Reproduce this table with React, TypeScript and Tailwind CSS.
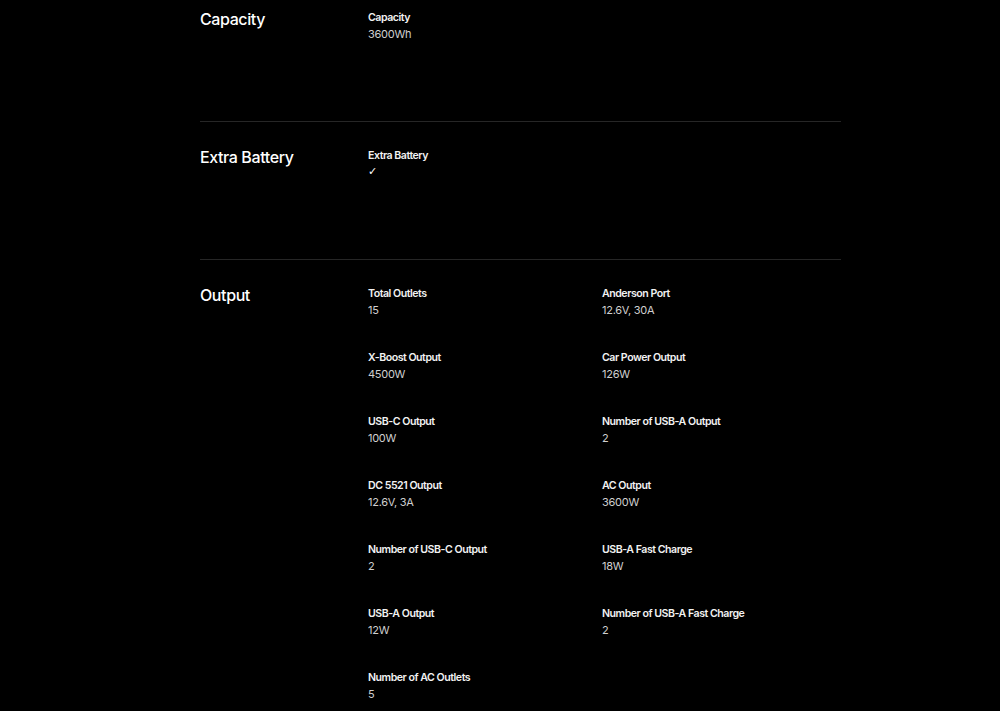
import * as React from "react";

type Spec = { label: string; value: string };

const sections: { title: string; specs: Spec[] }[] = [
  { title: "Capacity", specs: [{ label: "Capacity", value: "3600Wh" }] },
  { title: "Extra Battery", specs: [{ label: "Extra Battery", value: "✓" }] },
  {
    title: "Output",
    specs: [
      { label: "Total Outlets", value: "15" },
      { label: "Anderson Port", value: "12.6V, 30A" },
      { label: "X-Boost Output", value: "4500W" },
      { label: "Car Power Output", value: "126W" },
      { label: "USB-C Output", value: "100W" },
      { label: "Number of USB-A Output", value: "2" },
      { label: "DC 5521 Output", value: "12.6V, 3A" },
      { label: "AC Output", value: "3600W" },
      { label: "Number of USB-C Output", value: "2" },
      { label: "USB-A Fast Charge", value: "18W" },
      { label: "USB-A Output", value: "12W" },
      { label: "Number of USB-A Fast Charge", value: "2" },
      { label: "Number of AC Outlets", value: "5" },
    ],
  },
];

const App: React.FC = () => {
  return (
    <div
      className="min-h-screen w-full bg-black text-white"
      style={{ fontFamily: "Inter, 'Noto Sans', sans-serif" }}
    >
      <div className="ml-[200px] w-[641px]">
        {sections.map((s, i) => (
          <section
            key={s.title}
            className={
              i === 0
                ? "flex pt-[4px] pb-[79px]"
                : "flex border-t border-[#262626] pt-[20px] pb-[79px]"
            }
          >
            <h3 className="mt-[3px] w-[168px] shrink-0 text-[16px] leading-6 font-medium tracking-[-0.025em] text-white">
              {s.title}
            </h3>
            <div className="mt-[6px] grid flex-1 grid-cols-[234px_1fr] gap-y-[32px]">
              {s.specs.map((sp) => (
                <div key={sp.label} className="flex flex-col">
                  <span className="text-[10.6px] leading-4 font-semibold tracking-[-0.045em] text-[#f2f2f2]">
                    {sp.label}
                  </span>
                  <span
                    className={
                      sp.value === "✓"
                        ? "text-[11px] leading-4 font-bold text-white"
                        : "text-[11px] leading-4 tracking-[-0.025em] text-[#cfcfcf]"
                    }
                    style={sp.value === "✓" ? { fontFamily: "'DejaVu Sans', sans-serif" } : undefined}
                  >
                    {sp.value}
                  </span>
                </div>
              ))}
            </div>
          </section>
        ))}
      </div>
    </div>
  );
};

export default App;
